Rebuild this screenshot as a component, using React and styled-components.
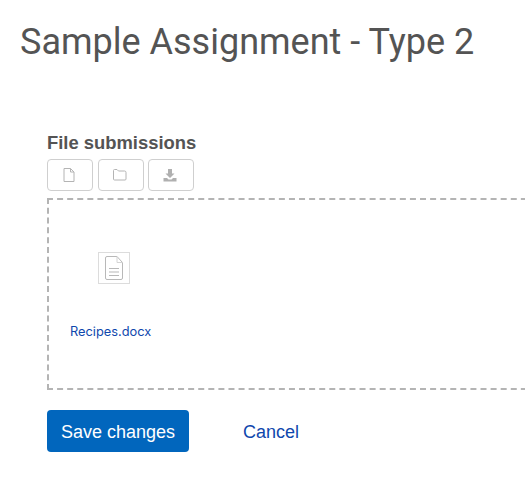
import styled, { createGlobalStyle } from "styled-components";

const GlobalStyle = createGlobalStyle`
    html, body {
        margin: 0;
        padding: 0;
        background: #fff;
        overflow: hidden;
    }
`;

const Page = styled.div`
    width: 525px;
    height: 484px;
    overflow: hidden;
    padding: 20px 0 0 20px;
    box-sizing: border-box;
    font-family: Roboto, "Liberation Sans", sans-serif;
`;

const Title = styled.h2`
    margin: 0;
    font-size: 36px;
    line-height: 44px;
    font-weight: 400;
    color: #545454;
`;

const Form = styled.div`
    margin: 68px 0 0 27px;
`;

const Label = styled.div`
    font-family: "Liberation Sans", Arial, sans-serif;
    font-size: 18.4px;
    line-height: 22px;
    font-weight: 700;
    color: #545454;
`;

const Toolbar = styled.div`
    display: flex;
    gap: 5px;
    margin-top: 5px;
`;

const ToolButton = styled.div`
    width: 46px;
    height: 32px;
    box-sizing: border-box;
    padding-right: 3px;
    display: flex;
    align-items: center;
    justify-content: center;
    border: 1px solid #cfcfcf;
    border-radius: 4px;
    background: #fff;

    &:last-child {
        margin-left: -1px;
    }
`;

const DropArea = styled.div`
    width: 500px;
    height: 192px;
    box-sizing: border-box;
    margin-top: 7px;
    border: 2px dashed #b4b4b4;
    padding: 52px 0 0 21px;
`;

const FileItem = styled.div`
    width: 90px;
    display: flex;
    flex-direction: column;
    align-items: flex-start;
`;

const Thumb = styled.div`
    width: 32px;
    height: 32px;
    margin-left: 28px;
    box-sizing: border-box;
    display: flex;
    align-items: center;
    justify-content: center;
    border: 1px solid #dcdcdc;
`;

const FileName = styled.a`
    margin-top: 40px;
    font-family: Inter, "Open Sans", sans-serif;
    font-size: 12.8px;
    line-height: 16px;
    color: #0f47ad;
    white-space: nowrap;
`;

const Actions = styled.div`
    display: flex;
    align-items: center;
    margin-top: 20px;
`;

const SaveButton = styled.button`
    width: 142px;
    height: 42px;
    padding: 2px 0 0;
    border: none;
    border-radius: 4px;
    background: #0166bd;
    color: #fff;
    font-family: "Liberation Sans", Arial, sans-serif;
    font-size: 18px;
`;

const CancelLink = styled.a`
    margin-left: 54px;
    padding-top: 2px;
    font-family: "Liberation Sans", Arial, sans-serif;
    font-size: 18px;
    color: #0f47ad;
`;

const FileIcon = () => (
    <svg width="12" height="14" viewBox="0 0 12 14" fill="none" stroke="#b4b4b4" strokeWidth="1">
        <path d="M1 .5h6.5l3.5 3.5v9.5h-10z" />
        <path d="M7.5 .5v3.5h3.5" />
    </svg>
);

const FolderIcon = () => (
    <svg width="14" height="12" viewBox="0 0 14 12" fill="none" stroke="#b4b4b4" strokeWidth="1">
        <path d="M.5 10V1.5q0-1 1-1h2.5l1.5 1.5h6q1.5 0 1.5 1.5V10q0 1-1 1h-10.5q-1 0-1-1z" />
    </svg>
);

const DownloadIcon = () => (
    <svg width="14" height="13" viewBox="0 0 14 13" fill="#b0b0b0">
        <path d="M5 0h4v4.5h2.5L7 9 2.5 4.5H5z" />
        <path d="M0.5 9h3.5l1.5 1.5h3L10 9h3.5v3.5h-13z" />
    </svg>
);

const DocIcon = () => (
    <svg width="18" height="24" viewBox="0 0 18 24" fill="none" stroke="#b8b8b8" strokeWidth="1">
        <path d="M2 .5h10l5.5 6v15.5q0 1.5-1.5 1.5H2q-1.5 0-1.5-1.5V2Q.5.5 2 .5z" />
        <path d="M12 .5v6h5.5" stroke="#d4d4d4" />
        <path d="M4 12.5h10M4 16h10M4 19.5h10" strokeWidth="1.2" />
    </svg>
);

const App = () => {
    return (
        <Page>
            <GlobalStyle />
            <Title>Sample Assignment - Type 2</Title>
            <Form>
                <Label>File submissions</Label>
                <Toolbar>
                    <ToolButton><FileIcon /></ToolButton>
                    <ToolButton><FolderIcon /></ToolButton>
                    <ToolButton><DownloadIcon /></ToolButton>
                </Toolbar>
                <DropArea>
                    <FileItem>
                        <Thumb><DocIcon /></Thumb>
                        <FileName>Recipes.docx</FileName>
                    </FileItem>
                </DropArea>
                <Actions>
                    <SaveButton>Save changes</SaveButton>
                    <CancelLink>Cancel</CancelLink>
                </Actions>
            </Form>
        </Page>
    );
};

export default App;
